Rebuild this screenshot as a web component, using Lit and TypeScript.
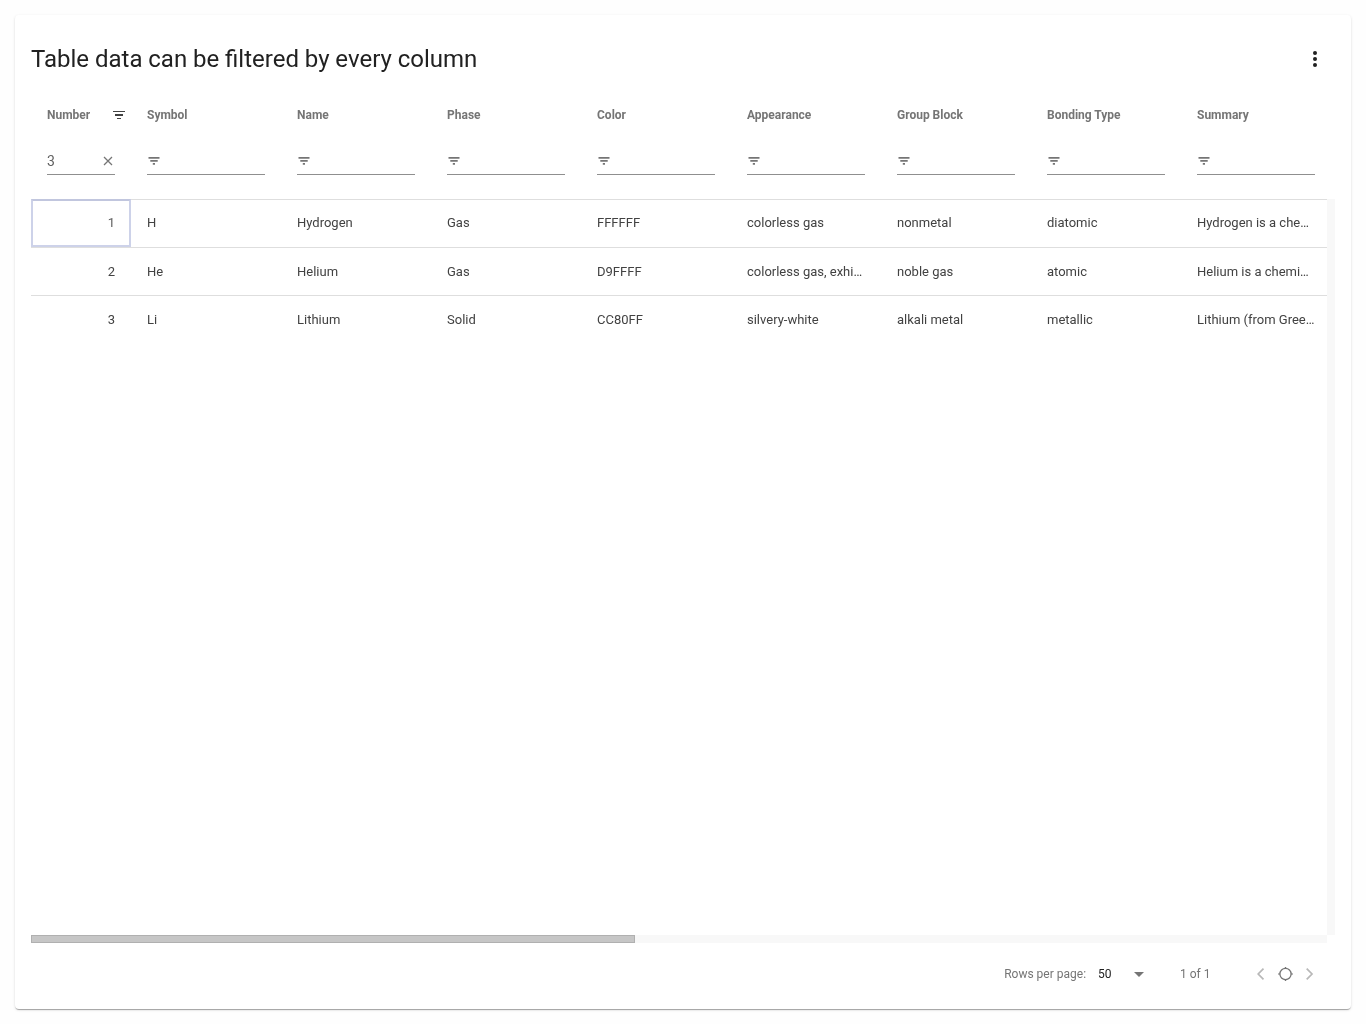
import { LitElement, html, css, svg } from "lit";
import { customElement, property } from "lit/decorators.js";

interface Column {
  label: string;
  numeric?: boolean;
  filter?: string;
}

const columns: Column[] = [
  { label: "Number", numeric: true, filter: "3" },
  { label: "Symbol" },
  { label: "Name" },
  { label: "Phase" },
  { label: "Color" },
  { label: "Appearance" },
  { label: "Group Block" },
  { label: "Bonding Type" },
  { label: "Summary" },
];

const rows: string[][] = [
  ["1", "H", "Hydrogen", "Gas", "FFFFFF", "colorless gas", "nonmetal", "diatomic", "Hydrogen is a chemical"],
  ["2", "He", "Helium", "Gas", "D9FFFF", "colorless gas, exhibiting", "noble gas", "atomic", "Helium is a chemical"],
  ["3", "Li", "Lithium", "Solid", "CC80FF", "silvery-white", "alkali metal", "metallic", "Lithium (from Greek)"],
];

const icons = {
  sorted: svg`<path d="M0 0h12v1H0zM2 3h8v2H2zM4 7h4v1H4z"/>`,
  filter: svg`<path d="M.5 0h11v1.8H.5zM2.3 3h7.4v1.8H2.3zM4.8 6h2.2v1.8H4.8z"/>`,
  clear: svg`<path d="M1 1l8 8M9 1l-8 8" fill="none" stroke="currentColor" stroke-width="1.25"/>`,
  more: svg`<circle cx="2" cy="2" r="2"/><circle cx="2" cy="8" r="2"/><circle cx="2" cy="14" r="2"/>`,
  caret: svg`<path d="M0 0h10L5 5z"/>`,
  prev: svg`<path d="M6.5 .7L1.2 6l5.3 5.3" fill="none" stroke="currentColor" stroke-width="1.7"/>`,
  next: svg`<path d="M.7 .7L6 6 .7 11.3" fill="none" stroke="currentColor" stroke-width="1.7"/>`,
  current: svg`<circle cx="7.5" cy="7" r="5.6" fill="none" stroke="currentColor" stroke-width="1.3"/><path d="M0 6.4h2v1.2H0zM13 6.4h2v1.2h-2zM6.8 0h1.4v1.4H6.8zM6.8 12.6h1.4v1.4H6.8z"/>`,
};

@customElement("table-header-cell")
class TableHeaderCell extends LitElement {
  @property({ attribute: false }) column!: Column;

  static styles = css`
    :host { display: block; padding: 0 16px; }
    .label {
      display: flex; align-items: center; height: 48px;
      font-size: 12px; font-weight: 700; color: #757575;
    }
    .label svg { margin-left: auto; margin-right: -10px; color: #424242; }
    .field {
      display: flex; align-items: center; box-sizing: border-box; height: 28px; margin-top: 8px;
      border-bottom: 1px solid #8f8f8f; color: #757575;
    }
    .field svg { margin-left: 1px; }
    .value { font-size: 14px; color: #616161; }
    .field.filled { padding-top: 1px; }
    .field.filled svg { margin: 0 2px 0 auto; }
    svg { display: block; flex: none; fill: currentColor; }
  `;

  render() {
    const c = this.column;
    return html`
      <div class="label">
        ${c.label}${c.filter ? html`<svg width="12" height="8" viewBox="0 0 12 8">${icons.sorted}</svg>` : ""}
      </div>
      <div class="field ${c.filter ? "filled" : ""}">
        ${c.filter
          ? html`<span class="value">${c.filter}</span><svg width="10" height="10" viewBox="0 0 10 10">${icons.clear}</svg>`
          : html`<svg width="12" height="8" viewBox="0 0 12 8">${icons.filter}</svg>`}
      </div>
    `;
  }
}

@customElement("app-root")
class AppRoot extends LitElement {
  static styles = css`
    :host {
      display: block; box-sizing: border-box; height: 1024px; padding: 15px;
      background: #fefefe; font-family: Roboto, "Liberation Sans", sans-serif;
    }
    .card {
      box-sizing: border-box; height: 994px; padding: 16px;
      display: flex; flex-direction: column; border-radius: 4px; background: #fff;
      box-shadow: 0 2px 1px -1px rgba(0,0,0,.2), 0 1px 1px rgba(0,0,0,.14), 0 1px 3px rgba(0,0,0,.12);
      will-change: transform;
    }
    .card > * { flex: none; }
    .title-bar {
      display: flex; align-items: center; justify-content: space-between;
      height: 56px; padding-right: 18px; color: #212121;
    }
    h1 { margin: 0; font-size: 24px; font-weight: 400; line-height: 32px; word-spacing: -0.1px; }
    .head, .row { display: grid; grid-template-columns: 100px repeat(8, 150px); }
    .head { width: 1304px; height: 108px; margin-top: 4px; overflow: hidden; }
    .viewport { display: grid; grid-template: 736px 8px / 1296px 8px; }
    .body { overflow: hidden; }
    .row { height: 47px; border-top: 1px solid #dedede; }
    .cell {
      padding: 0 16px; font-size: 13px; line-height: 47px; color: #424242;
      white-space: nowrap; overflow: hidden; text-overflow: ellipsis;
    }
    .numeric { text-align: right; }
    .active .cell { line-height: 45px; }
    .active .cell.numeric {
      margin-top: -1px; height: 44px; line-height: 43px; padding: 0 14px;
      border: 2px solid #cdd2e9; border-top-color: #c1c6de; color: #616161;
    }
    .vtrack, .htrack { background: #f8f8f8; }
    .thumb {
      box-sizing: border-box; width: 604px; height: 8px;
      background: #c6c6c6; border: 1px solid #b0b0b0;
    }
    .pager {
      display: flex; align-items: center; height: 62px;
      font-size: 12px; color: #757575; justify-content: flex-end; padding-right: 21px;
    }
    .size { margin-left: 12px; color: #212121; }
    .caret { margin-left: 22px; }
    .range { margin-left: 36.5px; }
    .prev { margin-left: 46.5px; color: #b8b8b8; }
    .current { margin-left: 12.5px; }
    .next { margin-left: 13.5px; color: #b8b8b8; }
    svg { display: block; flex: none; fill: currentColor; }
  `;

  render() {
    return html`
      <section class="card">
        <header class="title-bar">
          <h1>Table data can be filtered by every column</h1>
          <svg width="4" height="16" viewBox="0 0 4 16">${icons.more}</svg>
        </header>
        <div class="head">
          ${columns.map((c) => html`<table-header-cell .column=${c}></table-header-cell>`)}
        </div>
        <div class="viewport">
          <div class="body">
            ${rows.map((r, i) => html`
              <div class="row ${i === 0 ? "active" : ""}">
                ${r.map((v, j) => html`<div class="cell ${columns[j].numeric ? "numeric" : ""}">${v}</div>`)}
              </div>`)}
          </div>
          <div class="vtrack"></div>
          <div class="htrack"><div class="thumb"></div></div>
        </div>
        <footer class="pager">
          <span>Rows per page:</span>
          <span class="size">50</span>
          <svg class="caret" width="10" height="5" viewBox="0 0 10 5">${icons.caret}</svg>
          <span class="range">1 of 1</span>
          <svg class="prev" width="8" height="12" viewBox="0 0 8 12">${icons.prev}</svg>
          <svg class="current" width="15" height="14" viewBox="0 0 15 14">${icons.current}</svg>
          <svg class="next" width="8" height="12" viewBox="0 0 8 12">${icons.next}</svg>
        </footer>
      </section>
    `;
  }
}
